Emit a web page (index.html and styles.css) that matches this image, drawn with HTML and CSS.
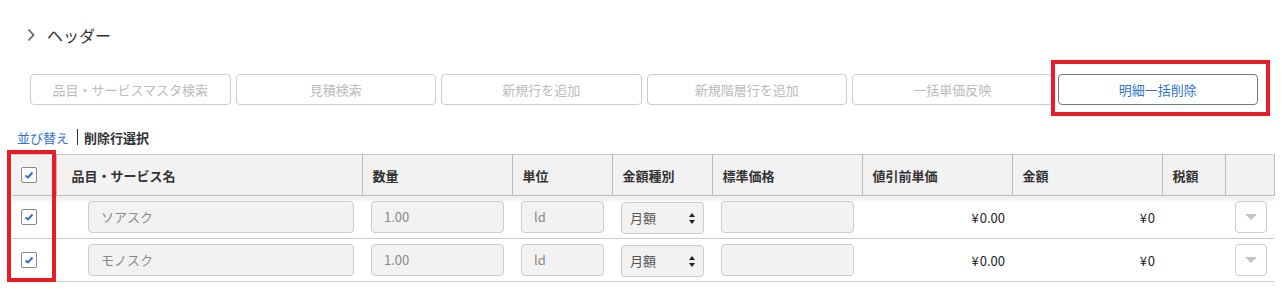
FILE: index.html
```html
<!DOCTYPE html>
<html lang="ja">
    <head>
        <meta charset="UTF-8">
        <meta name="viewport" content="width=device-width, initial-scale=1.0">
        <title>明細</title>
        <link rel="stylesheet" href="styles.css">
    </head>
    <body>
        <div class="page">
            <div class="section-title">
                <svg class="chevron" width="10" height="14" viewBox="0 0 10 14">
                    <path d="M2.5 1.5 L7.5 7 L2.5 12.5" fill="none" stroke="#666" stroke-width="1.8"/>
                </svg>
                <span>ヘッダー</span>
            </div>

            <div class="toolbar">
                <button class="tool-button" disabled>品目・サービスマスタ検索</button>
                <button class="tool-button" disabled>見積検索</button>
                <button class="tool-button" disabled>新規行を追加</button>
                <button class="tool-button" disabled>新規階層行を追加</button>
                <button class="tool-button" disabled>一括単価反映</button>
                <button class="tool-button active">明細一括削除</button>
            </div>

            <div class="row-links">
                <a class="sort-link">並び替え</a>
                <span class="divider"></span>
                <span class="delete-mode">削除行選択</span>
            </div>

            <table class="detail-table">
                <colgroup>
                    <col style="width: 44px">
                    <col style="width: 306px">
                    <col style="width: 150px">
                    <col style="width: 100px">
                    <col style="width: 100px">
                    <col style="width: 150px">
                    <col style="width: 150px">
                    <col style="width: 150px">
                    <col style="width: 63px">
                    <col style="width: 49px">
                </colgroup>
                <thead>
                    <tr>
                        <th class="check-cell"><span class="check-box"><svg width="10" height="8" viewBox="0 0 10 8"><path d="M1.5 4.5 L4 6.5 L8.5 1.5" fill="none" stroke="#2a6fd6" stroke-width="2"/></svg></span></th>
                        <th class="name-head">品目・サービス名</th>
                        <th>数量</th>
                        <th>単位</th>
                        <th>金額種別</th>
                        <th>標準価格</th>
                        <th>値引前単価</th>
                        <th>金額</th>
                        <th>税額</th>
                        <th></th>
                    </tr>
                </thead>
                <tbody>
                    <tr class="first-row">
                        <td class="check-cell"><span class="check-box"><svg width="10" height="8" viewBox="0 0 10 8"><path d="M1.5 4.5 L4 6.5 L8.5 1.5" fill="none" stroke="#2a6fd6" stroke-width="2"/></svg></span></td>
                        <td class="name-cell"><div class="field">ソアスク</div></td>
                        <td><div class="field">1.00</div></td>
                        <td><div class="field">ld</div></td>
                        <td><div class="field select-field">月額<span class="spin"><i class="up"></i><i class="down"></i></span></div></td>
                        <td><div class="field"></div></td>
                        <td class="money">¥ 0.00</td>
                        <td class="money">¥ 0</td>
                        <td></td>
                        <td class="menu-cell"><span class="menu-button"><i></i></span></td>
                    </tr>
                    <tr>
                        <td class="check-cell"><span class="check-box"><svg width="10" height="8" viewBox="0 0 10 8"><path d="M1.5 4.5 L4 6.5 L8.5 1.5" fill="none" stroke="#2a6fd6" stroke-width="2"/></svg></span></td>
                        <td class="name-cell"><div class="field">モノスク</div></td>
                        <td><div class="field">1.00</div></td>
                        <td><div class="field">ld</div></td>
                        <td><div class="field select-field">月額<span class="spin"><i class="up"></i><i class="down"></i></span></div></td>
                        <td><div class="field"></div></td>
                        <td class="money">¥ 0.00</td>
                        <td class="money">¥ 0</td>
                        <td></td>
                        <td class="menu-cell"><span class="menu-button"><i></i></span></td>
                    </tr>
                </tbody>
            </table>

            <!-- annotation boxes -->
            <div class="mark mark-button"></div>
            <div class="mark mark-checks"></div>
        </div>
    </body>
</html>
```

FILE: styles.css
```css
body {
    margin: 0;
    font-family: "Noto Sans CJK JP", "Noto Sans", sans-serif;
    color: #333;
    background: #fff;
}
.page {
    position: relative;
    width: 1282px;
    height: 295px;
}
.section-title {
    display: flex;
    align-items: center;
    padding: 24px 0 0 26px;
    height: 22px;
    font-size: 16px;
    color: #333;
}
.chevron {
    margin-right: 11px;
}
.toolbar {
    display: flex;
    gap: 5px;
    margin: 28px 0 0 30px;
    width: 1228px;
}
.tool-button {
    flex: 1;
    height: 31px;
    background: #fff;
    border: 1px solid #ccc;
    border-radius: 4px;
    font-family: inherit;
    font-size: 13px;
    color: #bbb;
    padding: 0;
}
.tool-button.active {
    border-color: #777;
    color: #2f72d4;
}
.row-links {
    display: flex;
    align-items: center;
    margin: 23px 0 0 17px;
    height: 18px;
    font-size: 13px;
}
.sort-link {
    color: #2f72d4;
}
.divider {
    width: 1px;
    height: 16px;
    background: #333;
    margin: 0 6px 0 8px;
}
.delete-mode {
    font-weight: bold;
    color: #333;
}
.detail-table {
    margin: 8px 0 0 12px;
    width: 1262px;
    table-layout: fixed;
    border-collapse: collapse;
    font-size: 13px;
}
.detail-table th {
    height: 40px;
    padding: 0 0 0 10px;
    background: #f2f2f2;
    border-top: 1px solid #ccc;
    border-bottom: 1px solid #bbb;
    border-left: 1px solid #bbb;
    border-right: 1px solid #bbb;
    text-align: left;
    font-weight: bold;
    color: #333;
}
.detail-table th.name-head {
    padding-left: 15px;
}
.detail-table td {
    height: 42px;
    padding: 0 8px 0 9px;
    border-bottom: 1px solid #ccc;
}
.first-row td {
    background: linear-gradient(#ececec, #fff 7px);
}
.detail-table .check-cell {
    padding: 0 0 0 9px;
    border-left: none;
}
.detail-table td.name-cell {
    padding-left: 32px;
}
.check-box {
    display: flex;
    align-items: center;
    justify-content: center;
    width: 14px;
    height: 14px;
    border: 1px solid #888;
    border-radius: 2px;
    background: #fff;
}
.field {
    box-sizing: border-box;
    height: 32px;
    line-height: 30px;
    padding: 0 12px;
    background: #f2f2f2;
    border: 1px solid #ccc;
    border-radius: 4px;
    color: #888;
    font-size: 13px;
}
.select-field {
    position: relative;
    padding-left: 8px;
    color: #555;
    margin-top: 1px;
}
.spin {
    position: absolute;
    right: 8px;
    top: 10px;
    display: flex;
    flex-direction: column;
    gap: 3px;
}
.spin i {
    width: 0;
    height: 0;
    border-left: 3px solid transparent;
    border-right: 3px solid transparent;
}
.spin .up {
    border-bottom: 4px solid #222;
}
.spin .down {
    border-top: 4px solid #222;
}
.detail-table td.money {
    text-align: right;
    padding-right: 7px;
    color: #222;
    word-spacing: -2px;
}
.detail-table td.menu-cell {
    padding: 0 0 0 10px;
}
.menu-button {
    box-sizing: border-box;
    display: flex;
    align-items: center;
    justify-content: center;
    width: 32px;
    height: 32px;
    border: 1px solid #ccc;
    border-radius: 4px;
    background: #fff;
}
.menu-button i {
    width: 0;
    height: 0;
    border-left: 6px solid transparent;
    border-right: 6px solid transparent;
    border-top: 6px solid #c4c4c4;
}
.mark {
    position: absolute;
    border: 4px solid #e81c24;
    box-sizing: border-box;
}
.mark-button {
    left: 1051px;
    top: 60px;
    width: 219px;
    height: 56px;
}
.mark-checks {
    left: 7px;
    top: 150px;
    width: 49px;
    height: 132px;
}
```
